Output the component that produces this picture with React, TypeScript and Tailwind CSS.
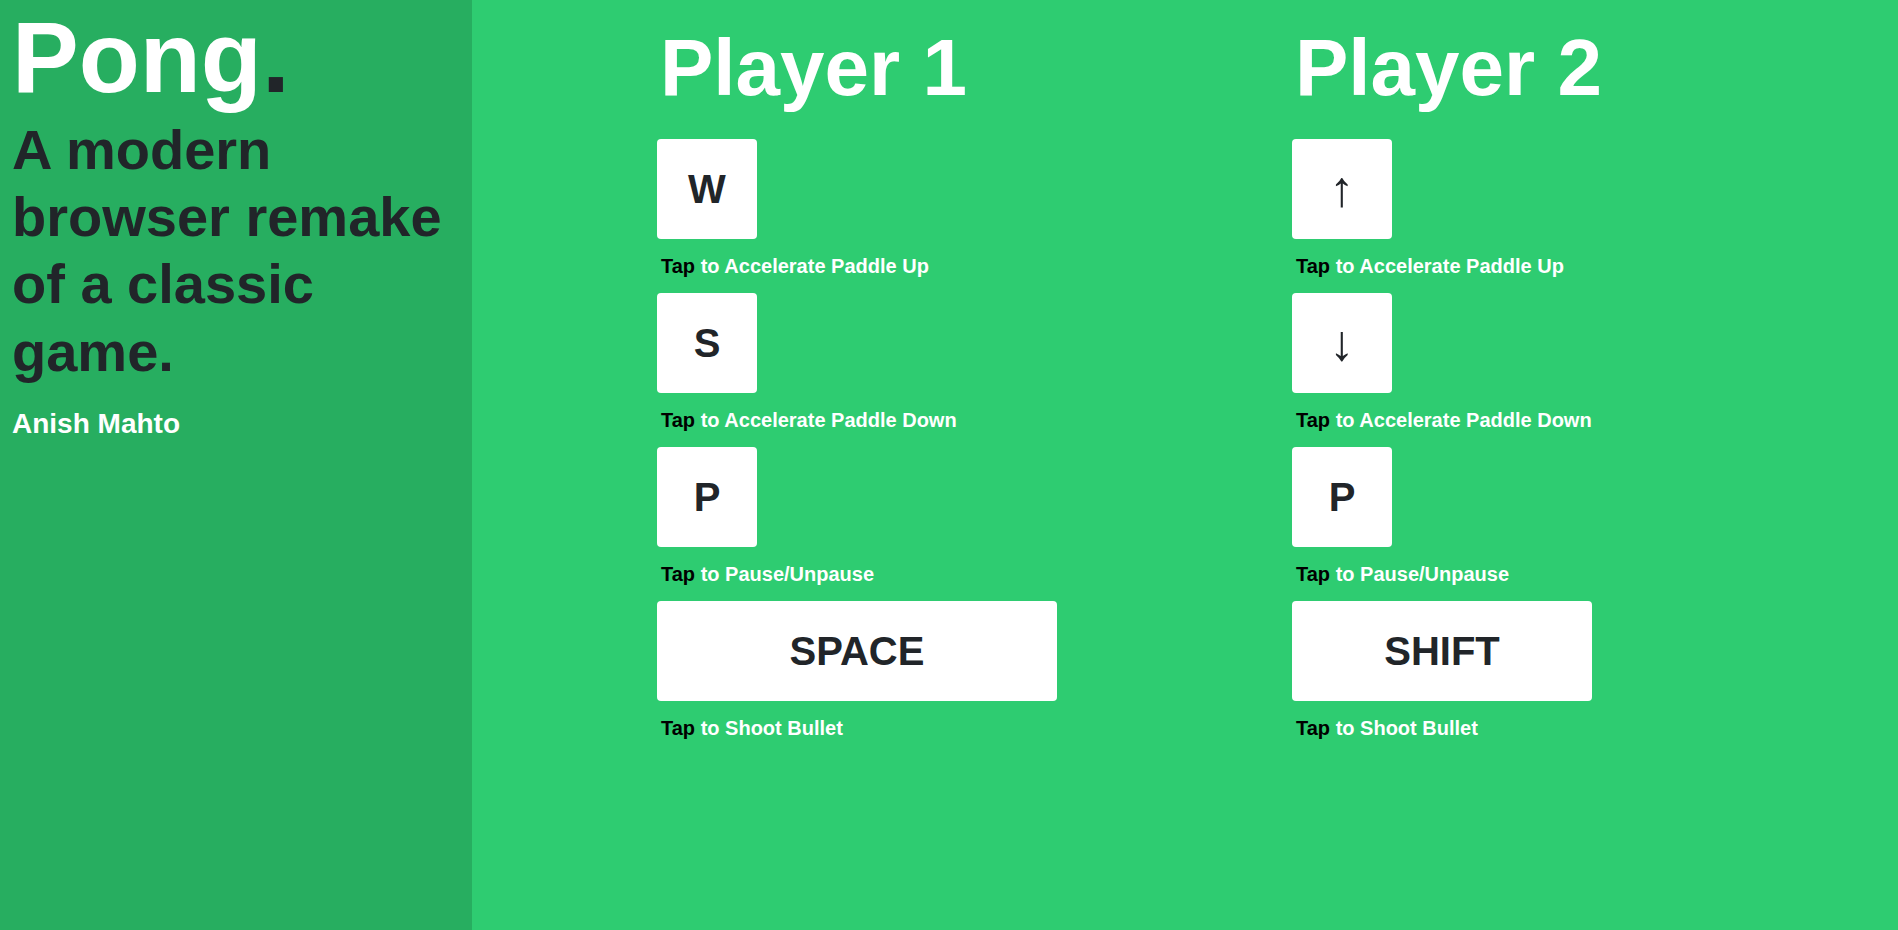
import React from "react";

const font = { fontFamily: '"Liberation Sans", Arial, sans-serif' };

function Key({ label, wide, arrow }: { label: string; wide?: number; arrow?: boolean }) {
  const w = wide === 400 ? "w-[400px]" : wide === 300 ? "w-[300px]" : "w-[100px]";
  const size = arrow ? "text-[50px] font-normal" : "text-[40px] font-bold";
  return (
    <div
      className={`${w} h-[100px] bg-white rounded flex items-center justify-center ${size} text-[#212529] leading-none`}
    >
      {label}
    </div>
  );
}

function Caption({ text }: { text: string }) {
  return (
    <div className="mt-[15px] mb-[15px] ml-[4px] text-[20px] leading-[24px] font-bold text-white">
      <span className="text-black">Tap</span> {text}
    </div>
  );
}

function Player({
  title,
  keys,
}: {
  title: string;
  keys: { label: string; text: string; wide?: number; arrow?: boolean }[];
}) {
  return (
    <div className="w-[635px] flex flex-col items-start">
      <h1 className="pt-[20px] mb-[23px] ml-[3px] text-[80px] leading-[96px] font-bold text-white">
        {title}
      </h1>
      {keys.map((k, i) => (
        <div key={i} className="flex flex-col items-start">
          <Key label={k.label} wide={k.wide} arrow={k.arrow} />
          <Caption text={k.text} />
        </div>
      ))}
    </div>
  );
}

export default function App() {
  return (
    <div className="flex h-[930px] w-full overflow-hidden" style={font}>
      <div className="w-[472px] shrink-0 bg-[#27ae60] pl-[12px] pr-[6px]">
        <div className="text-[100px] leading-[115px] font-bold text-white">
          Pong<span className="text-[#212529]">.</span>
        </div>
        <div className="mt-[1px] text-[56px] leading-[67.2px] font-bold text-[#212529]">
          A modern browser remake of a classic game.
        </div>
        <div className="mt-[22px] text-[28px] leading-[33.6px] font-bold text-white">
          Anish Mahto
        </div>
      </div>
      <div className="flex-1 bg-[#2ecc71] flex pl-[185px]">
        <Player
          title="Player 1"
          keys={[
            { label: "W", text: "to Accelerate Paddle Up" },
            { label: "S", text: "to Accelerate Paddle Down" },
            { label: "P", text: "to Pause/Unpause" },
            { label: "SPACE", text: "to Shoot Bullet", wide: 400 },
          ]}
        />
        <Player
          title="Player 2"
          keys={[
            { label: "↑", text: "to Accelerate Paddle Up", arrow: true },
            { label: "↓", text: "to Accelerate Paddle Down", arrow: true },
            { label: "P", text: "to Pause/Unpause" },
            { label: "SHIFT", text: "to Shoot Bullet", wide: 300 },
          ]}
        />
      </div>
    </div>
  );
}
